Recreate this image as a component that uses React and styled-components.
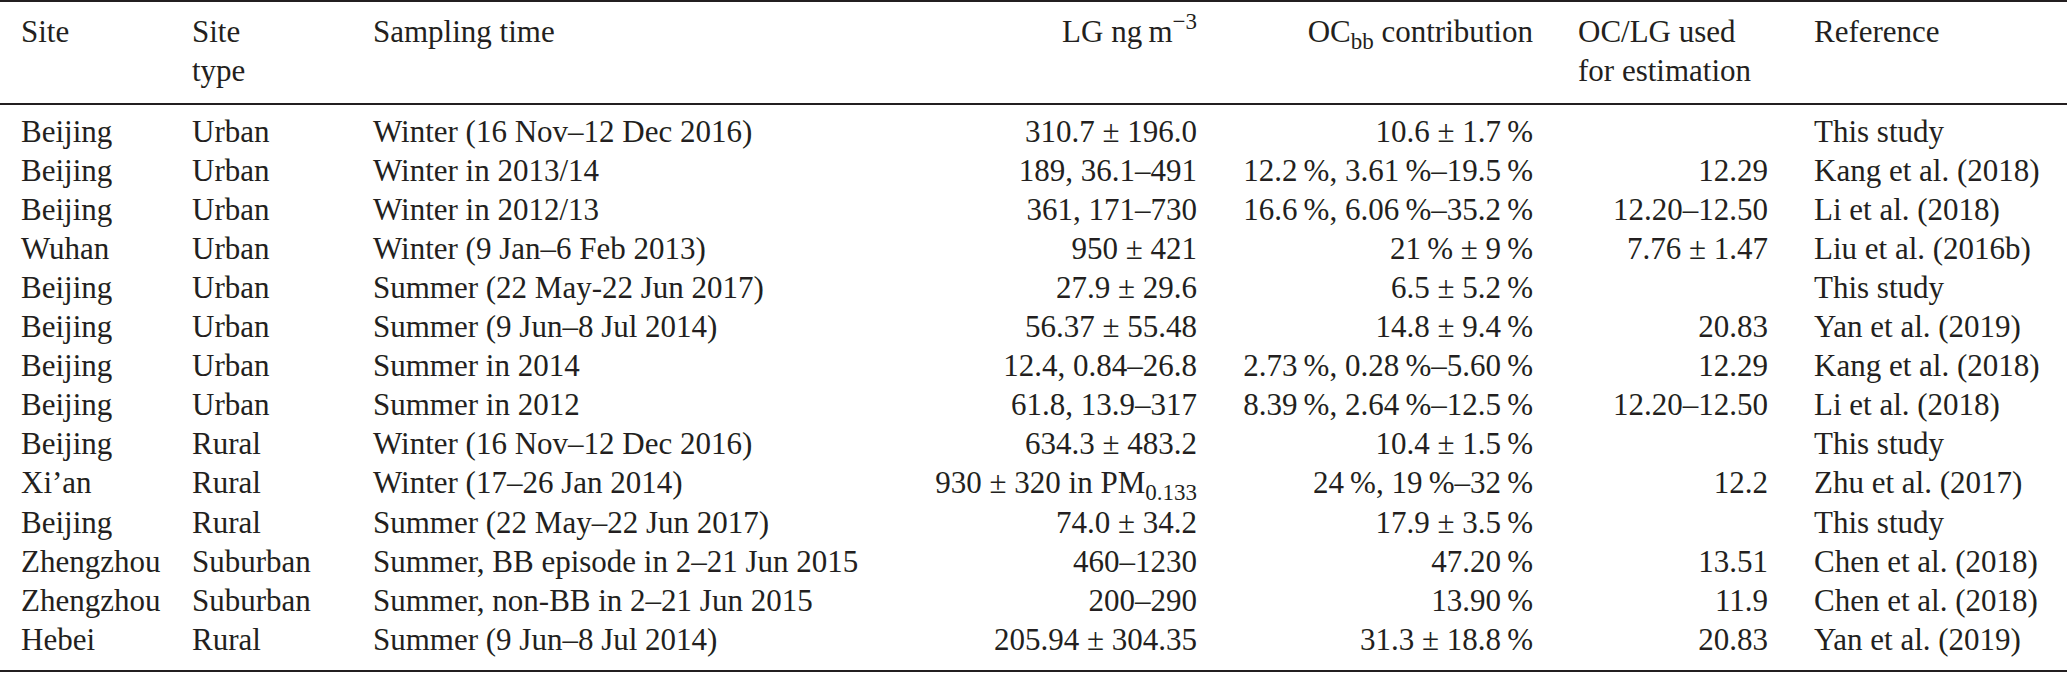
import React from "react";
import styled, { createGlobalStyle } from "styled-components";

const GlobalStyle = createGlobalStyle`
  html, body {
    margin: 0;
    padding: 0;
    background: #ffffff;
  }
  body {
    font-family: "Liberation Serif", "Times New Roman", serif;
    color: #231f20;
  }
`;

const COLUMNS = "171px 181px 507px 317px 336px 281px 253px";

const TableStyled = styled.div`
  width: 2067px;
  border-top: 2px solid #231f20;
  border-bottom: 2px solid #231f20;
  font-family: "Liberation Serif", "Times New Roman", serif;
  font-size: 31px;
  line-height: 39px;
  color: #231f20;
`;

const HeaderRow = styled.div`
  display: grid;
  grid-template-columns: ${COLUMNS};
  padding: 10px 0 13px 21px;
  border-bottom: 2px solid #231f20;
`;

const Body = styled.div`
  padding: 7px 0 11px 21px;
`;

const Row = styled.div`
  display: grid;
  grid-template-columns: ${COLUMNS};
  height: ${(p) => (p.$tall ? 40 : 39)}px;
`;

const Cell = styled.div`
  text-align: ${(p) => p.$align || "left"};
  padding-left: ${(p) => p.$padLeft || 0}px;
  padding-right: ${(p) => p.$padRight || 0}px;
  white-space: nowrap;
`;

const Sub = styled.sub`
  font-size: 23px;
  line-height: 0;
  vertical-align: -7px;
`;

const Sup = styled.sup`
  font-size: 23px;
  line-height: 0;
  vertical-align: 13px;
`;

const T = "\u2009";

const rows = [
  ["Beijing", "Urban", "Winter (16 Nov–12 Dec 2016)", "310.7 ± 196.0", `10.6 ± 1.7${T}%`, "", "This study"],
  ["Beijing", "Urban", "Winter in 2013/14", "189, 36.1–491", `12.2${T}%, 3.61${T}%–19.5${T}%`, "12.29", "Kang et al. (2018)"],
  ["Beijing", "Urban", "Winter in 2012/13", "361, 171–730", `16.6${T}%, 6.06${T}%–35.2${T}%`, "12.20–12.50", "Li et al. (2018)"],
  ["Wuhan", "Urban", "Winter (9 Jan–6 Feb 2013)", "950 ± 421", `21${T}% ± 9${T}%`, "7.76 ± 1.47", "Liu et al. (2016b)"],
  ["Beijing", "Urban", "Summer (22 May-22 Jun 2017)", "27.9 ± 29.6", `6.5 ± 5.2${T}%`, "", "This study"],
  ["Beijing", "Urban", "Summer (9 Jun–8 Jul 2014)", "56.37 ± 55.48", `14.8 ± 9.4${T}%`, "20.83", "Yan et al. (2019)"],
  ["Beijing", "Urban", "Summer in 2014", "12.4, 0.84–26.8", `2.73${T}%, 0.28${T}%–5.60${T}%`, "12.29", "Kang et al. (2018)"],
  ["Beijing", "Urban", "Summer in 2012", "61.8, 13.9–317", `8.39${T}%, 2.64${T}%–12.5${T}%`, "12.20–12.50", "Li et al. (2018)"],
  ["Beijing", "Rural", "Winter (16 Nov–12 Dec 2016)", "634.3 ± 483.2", `10.4 ± 1.5${T}%`, "", "This study"],
  [
    "Xi’an",
    "Rural",
    "Winter (17–26 Jan 2014)",
    <>930 ± 320 in PM<Sub>0.133</Sub></>,
    `24${T}%, 19${T}%–32${T}%`,
    "12.2",
    "Zhu et al. (2017)",
  ],
  ["Beijing", "Rural", "Summer (22 May–22 Jun 2017)", "74.0 ± 34.2", `17.9 ± 3.5${T}%`, "", "This study"],
  ["Zhengzhou", "Suburban", "Summer, BB episode in 2–21 Jun 2015", "460–1230", `47.20${T}%`, "13.51", "Chen et al. (2018)"],
  ["Zhengzhou", "Suburban", "Summer, non-BB in 2–21 Jun 2015", "200–290", `13.90${T}%`, "11.9", "Chen et al. (2018)"],
  ["Hebei", "Rural", "Summer (9 Jun–8 Jul 2014)", "205.94 ± 304.35", `31.3 ± 18.8${T}%`, "20.83", "Yan et al. (2019)"],
];

function DataRow({ cells, tall }) {
  const [site, type, time, lg, oc, ratio, ref] = cells;
  return (
    <Row $tall={tall}>
      <Cell>{site}</Cell>
      <Cell>{type}</Cell>
      <Cell>{time}</Cell>
      <Cell $align="right">{lg}</Cell>
      <Cell $align="right">{oc}</Cell>
      <Cell $align="right" $padRight={46}>{ratio}</Cell>
      <Cell>{ref}</Cell>
    </Row>
  );
}

export default function App() {
  return (
    <>
      <GlobalStyle />
      <TableStyled>
        <HeaderRow>
          <Cell>Site</Cell>
          <Cell>Site<br />type</Cell>
          <Cell>Sampling time</Cell>
          <Cell $align="right">LG ng{T}m<Sup>−3</Sup></Cell>
          <Cell $align="right">OC<Sub>bb</Sub> contribution</Cell>
          <Cell $padLeft={45}>OC/LG used<br />for estimation</Cell>
          <Cell>Reference</Cell>
        </HeaderRow>
        <Body>
          {rows.map((r, i) => (
            <DataRow key={i} cells={r} tall={i === 9} />
          ))}
        </Body>
      </TableStyled>
    </>
  );
}
